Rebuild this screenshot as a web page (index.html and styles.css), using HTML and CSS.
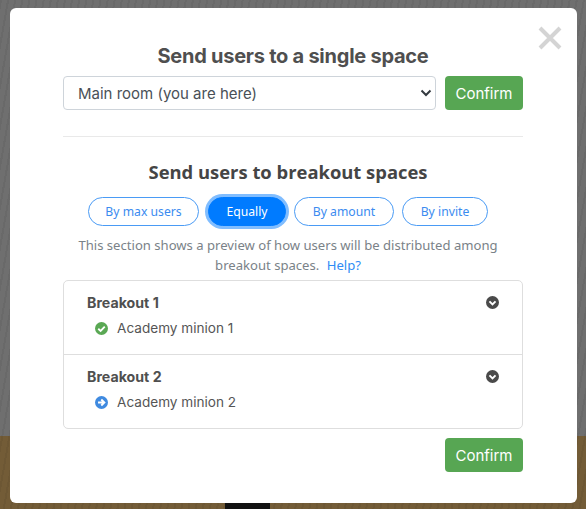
FILE: index.html
```html
<!DOCTYPE html>
<html lang="en">

<head>
    <meta charset="UTF-8">
    <meta name="viewport" content="width=device-width, initial-scale=1.0">
    <title>Send users</title>
    <link rel="stylesheet" href="styles.css">
</head>

<body>
    <div class="stage">
        <div class="feet"></div>
        <div class="modal">
            <button class="close" aria-label="Close">
                <svg width="24" height="24" viewBox="0 0 24 24">
                    <path d="M2 2 L22 22 M22 2 L2 22" stroke="#d4d4d4" stroke-width="4" fill="none"></path>
                </svg>
            </button>

            <h2 class="title">Send users to a single space</h2>
            <div class="single-row">
                <div class="select">
                    <span>Main room (you are here)</span>
                    <svg width="12" height="8" viewBox="0 0 12 8">
                        <path d="M1.5 1.5 L6 6 L10.5 1.5" stroke="#343a40" stroke-width="2" fill="none"></path>
                    </svg>
                </div>
                <button class="confirm">Confirm</button>
            </div>

            <hr class="divider">

            <div class="breakout">
                <h2 class="title title-breakout">Send users to breakout spaces</h2>
                <div class="pills">
                    <button class="pill pill-max">By max users</button>
                    <button class="pill pill-equal active">Equally</button>
                    <button class="pill pill-amount">By amount</button>
                    <button class="pill pill-invite">By invite</button>
                </div>
                <p class="hint">This section shows a preview of how users will be distributed among<br>breakout spaces. <a href="#">Help?</a></p>
            </div>

            <div class="list">
                <div class="group">
                    <div class="group-head">
                        <span>Breakout 1</span>
                        <svg class="toggle" width="13" height="13" viewBox="0 0 12 12">
                            <circle cx="6" cy="6" r="6" fill="#4a4a4a"></circle>
                            <path d="M3.2 5 L6 7.8 L8.8 5" stroke="#fff" stroke-width="1.8" fill="none"></path>
                        </svg>
                    </div>
                    <div class="user">
                        <svg width="13" height="13" viewBox="0 0 12 12">
                            <circle cx="6" cy="6" r="6" fill="#5aa854"></circle>
                            <path d="M3 6.2 L5.2 8.3 L9 4.2" stroke="#fff" stroke-width="1.7" fill="none"></path>
                        </svg>
                        <span>Academy minion 1</span>
                    </div>
                </div>
                <div class="group">
                    <div class="group-head">
                        <span>Breakout 2</span>
                        <svg class="toggle" width="13" height="13" viewBox="0 0 12 12">
                            <circle cx="6" cy="6" r="6" fill="#4a4a4a"></circle>
                            <path d="M3.2 5 L6 7.8 L8.8 5" stroke="#fff" stroke-width="1.8" fill="none"></path>
                        </svg>
                    </div>
                    <div class="user">
                        <svg width="13" height="13" viewBox="0 0 12 12">
                            <circle cx="6" cy="6" r="6" fill="#3f8ae0"></circle>
                            <path d="M2.8 6 L8 6 M5.8 3.2 L8.6 6 L5.8 8.8" stroke="#fff" stroke-width="1.8" fill="none"></path>
                        </svg>
                        <span>Academy minion 2</span>
                    </div>
                </div>
            </div>

            <div class="footer">
                <button class="confirm">Confirm</button>
            </div>
        </div>
    </div>
</body>

</html>
```

FILE: styles.css
```css
* {
    box-sizing: border-box;
}

body {
    margin: 0;
    font-family: "Inter", "Liberation Sans", sans-serif;
    color: #495057;
}

.stage {
    position: relative;
    width: 586px;
    height: 509px;
    padding: 8px 9px 6px 10px;
    background:
        repeating-linear-gradient(100deg, rgba(0, 0, 0, 0.05) 0 2px, transparent 2px 7px),
        linear-gradient(#6f6f6f 0, #6f6f6f 436px, #735c37 436px, #735c37 100%);
    overflow: hidden;
}

.feet {
    position: absolute;
    left: 225px;
    bottom: 0;
    width: 45px;
    height: 6px;
    background: #111;
}

.modal {
    position: relative;
    height: 495px;
    padding: 36px 54px 0 53px;
    background: #fff;
    border-radius: 6px;
}

.close {
    position: absolute;
    top: 18px;
    right: 15px;
    padding: 0;
    border: 0;
    background: none;
    line-height: 0;
}

.title {
    margin: 0;
    height: 24px;
    font-size: 20px;
    line-height: 24px;
    font-weight: 700;
    text-align: center;
    letter-spacing: -0.25px;
    color: #4f4f4f;
}

.single-row {
    display: flex;
    gap: 9px;
    margin-top: 8px;
}

.select {
    flex: 1;
    display: flex;
    align-items: center;
    justify-content: space-between;
    height: 34px;
    padding: 0 3px 0 14px;
    border: 1px solid #ced4da;
    border-radius: 4px;
    font-size: 15px;
}

.confirm {
    width: 78px;
    height: 34px;
    padding: 0;
    border: 0;
    border-radius: 4px;
    background: #57a653;
    color: #fff;
    font-family: inherit;
    font-size: 15px;
}

.divider {
    height: 1px;
    margin: 26px 0 0;
    border: 0;
    background: #e9e9e9;
}

/* this block sits a little left of the modal centre */
.breakout {
    padding-right: 10px;
}

.title-breakout {
    margin-top: 23px;
    font-family: "Open Sans", sans-serif;
    font-size: 18.4px;
    letter-spacing: 0;
    color: #454545;
}

.pills {
    display: flex;
    justify-content: center;
    gap: 8px;
    margin-top: 13px;
}

.pill {
    height: 29px;
    padding: 0;
    border: 1px solid #4a9bf5;
    border-radius: 15px;
    background: #fff;
    color: #3b8bf0;
    font-family: "Noto Sans", sans-serif;
    font-size: 12.2px;
}

.pill-max {
    width: 111px;
    margin-right: 1px;
}

.pill-equal {
    width: 78px;
}

.pill-amount {
    width: 100px;
}

.pill-invite {
    width: 86px;
}

.pill.active {
    background: #007bff;
    border-color: #007bff;
    color: #fff;
    box-shadow: 0 0 0 3px #80bdff;
}

.hint {
    margin: 9px 0 0;
    font-family: "Noto Sans", sans-serif;
    font-size: 13.1px;
    line-height: 20px;
    text-align: center;
    color: #7a8288;
}

.hint a {
    margin-left: 4px;
    color: #2f8cf5;
    text-decoration: none;
}

.list {
    margin-top: 5px;
    border: 1px solid #dedede;
    border-radius: 5px;
}

.group {
    height: 73px;
    padding: 11px 23px 0;
}

.group + .group {
    height: 74px;
    border-top: 1px solid #dedede;
}

.group-head {
    display: flex;
    align-items: center;
    justify-content: space-between;
    height: 20px;
    font-size: 14.2px;
    font-weight: 700;
    color: #4f4f4f;
}

.user {
    display: flex;
    align-items: center;
    gap: 9px;
    height: 20px;
    margin-top: 6px;
    padding-left: 8px;
    font-size: 13.6px;
    color: #555;
}

.footer {
    display: flex;
    justify-content: flex-end;
    margin-top: 9px;
}
```
